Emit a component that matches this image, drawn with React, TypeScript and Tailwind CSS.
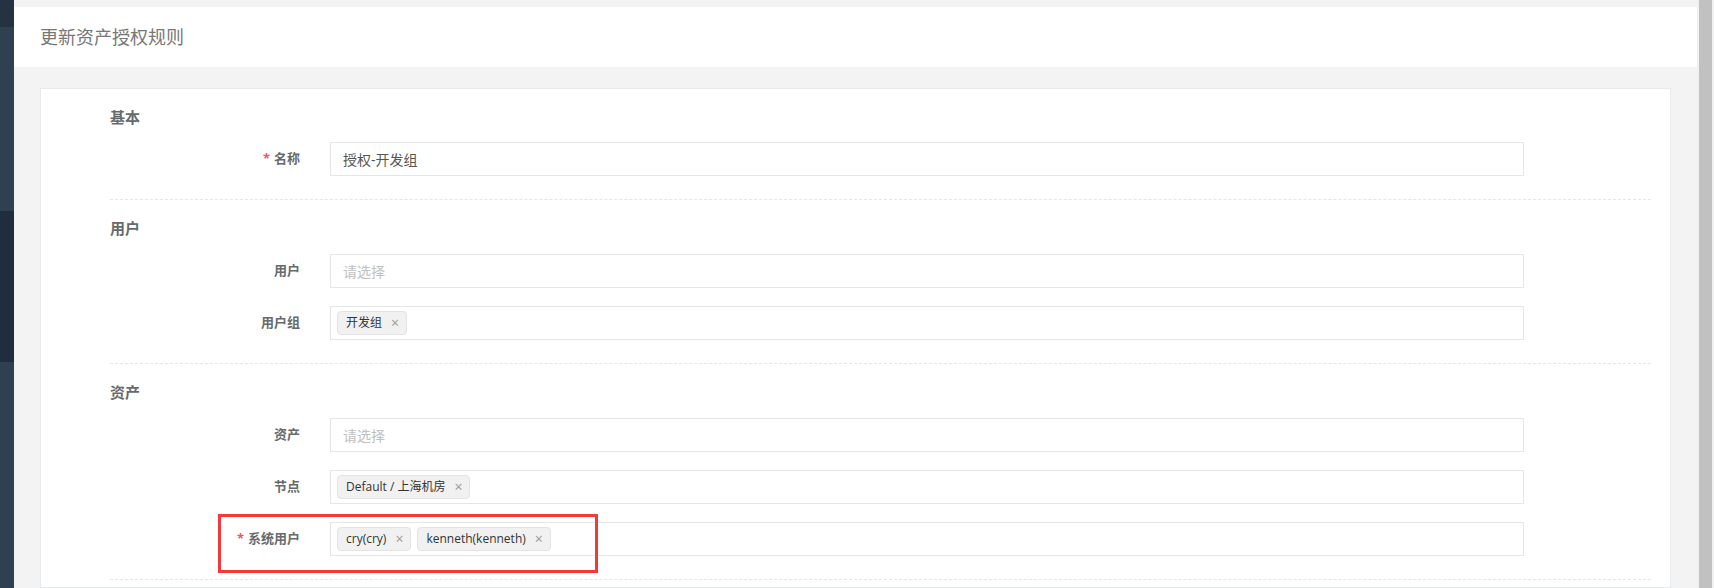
import React from "react";

const font = { fontFamily: '"Open Sans", "Noto Sans CJK SC", sans-serif' };

function Tag({ text }: { text: string }) {
  return (
    <span className="flex items-center h-[24px] pl-[8px] pr-[7px] bg-[#f1f1f1] border border-[#e3e3e3] rounded-[4px] text-[12px] text-[#333] leading-none">
      <span>{text}</span>
      <span className="ml-[9px] text-[14px] text-[#999] leading-none">×</span>
    </span>
  );
}

function Row({
  label,
  required,
  value,
  placeholder,
  tags,
}: {
  label: string;
  required?: boolean;
  value?: string;
  placeholder?: string;
  tags?: string[];
}) {
  return (
    <div className="flex items-center h-[34px]">
      <div className="w-[190px] flex justify-end items-center text-[13px] font-bold text-[#676a6c]">
        {required && <span className="text-[#ed5565] mr-[4px] text-[13px]">*</span>}
        <span>{label}</span>
      </div>
      <div className="ml-[30px] w-[1194px] h-[34px] border border-[#e5e6e7] bg-white flex items-center">
        {tags ? (
          <div className="flex items-center gap-[6px] pl-[6px]">
            {tags.map((t) => (
              <Tag key={t} text={t} />
            ))}
          </div>
        ) : value ? (
          <span className="pl-[12px] text-[14px] text-[#555]">{value}</span>
        ) : (
          <span className="pl-[12px] text-[14px] text-[#c0c0c0]">{placeholder}</span>
        )}
      </div>
    </div>
  );
}

function Section({ title, children, first }: { title: string; children: React.ReactNode; first?: boolean }) {
  return (
    <div className="pt-[18px]">
      <div className="h-[20px] leading-[20px] text-[15px] font-bold text-[#676a6c]">{title}</div>
      <div className={`${first ? "mt-[15px]" : "mt-[16px]"} flex flex-col gap-[18px]`}>{children}</div>
      <div className="mt-[23px] border-t border-dashed border-[#e5e6e7]" />
    </div>
  );
}

export default function App() {
  return (
    <div className="flex w-[1714px] h-[588px] overflow-hidden" style={font}>
      <div className="w-[14px] flex flex-col shrink-0">
        <div className="h-[27px] bg-[#243241]" />
        <div className="h-[184px] bg-[#2f4050]" />
        <div className="h-[151px] bg-[#1f2d3d]" />
        <div className="flex-1 bg-[#2f4050]" />
      </div>
      <div className="flex-1 bg-[#f3f3f4] pt-[7px] flex flex-col">
        <div className="h-[60px] bg-white flex items-center pl-[26px] text-[18px] text-[#777]">
          更新资产授权规则
        </div>
        <div className="px-[26px] pt-[21px] flex-1">
          <div className="relative bg-white border border-[#e7eaec] h-full pl-[69px] pr-[19px]">
            <Section title="基本" first>
              <Row label="名称" required value="授权-开发组" />
            </Section>
            <Section title="用户">
              <Row label="用户" placeholder="请选择" />
              <Row label="用户组" tags={["开发组"]} />
            </Section>
            <Section title="资产">
              <Row label="资产" placeholder="请选择" />
              <Row label="节点" tags={["Default / 上海机房"]} />
              <Row label="系统用户" required tags={["cry(cry)", "kenneth(kenneth)"]} />
            </Section>
            <div className="absolute left-[177px] top-[425px] w-[380px] h-[59px] border-[3px] border-[#f23a3a]" />
          </div>
        </div>
      </div>
      <div className="w-[17px] bg-[#f1f1f1] flex shrink-0">
        <div className="ml-[2px] w-[13px] h-full bg-[#c1c1c1]" />
      </div>
    </div>
  );
}
